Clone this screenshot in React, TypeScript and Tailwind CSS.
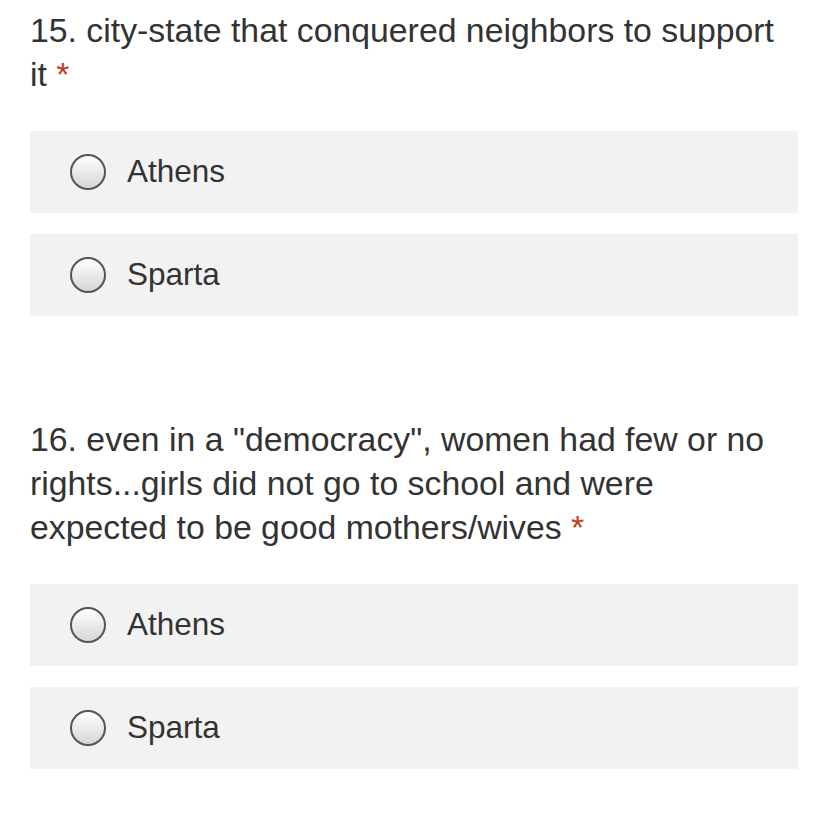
const questions = [
  {
    title: "15. city-state that conquered neighbors to support it",
    options: ["Athens", "Sparta"],
  },
  {
    title:
      '16. even in a "democracy", women had few or no rights...girls did not go to school and were expected to be good mothers/wives',
    options: ["Athens", "Sparta"],
  },
];

function Radio() {
  return (
    <span className="w-[36px] h-[36px] rounded-full border-2 border-[#555] bg-gradient-to-b from-white to-[#d6d6d6] shrink-0" />
  );
}

export default function App() {
  return (
    <div
      className="w-[828px] h-[828px] bg-white pl-[30px] pr-[30px] pt-[8px] text-[#333]"
      style={{ fontFamily: '"Liberation Sans", Arial, sans-serif' }}
    >
      {questions.map((q, i) => (
        <div key={i} className={i > 0 ? "mt-[101px]" : ""}>
          <div className="text-[33.8px] leading-[44px] pr-[10px]">
            {q.title} <span className="text-[#c43b1d]">*</span>
          </div>
          <div className="mt-[35px] flex flex-col gap-[21px]">
            {q.options.map((o) => (
              <label
                key={o}
                className="h-[82px] bg-[#f2f2f2] flex items-center pl-[40px] gap-[21px]"
              >
                <Radio />
                <span className="text-[31.5px]">{o}</span>
              </label>
            ))}
          </div>
        </div>
      ))}
    </div>
  );
}
